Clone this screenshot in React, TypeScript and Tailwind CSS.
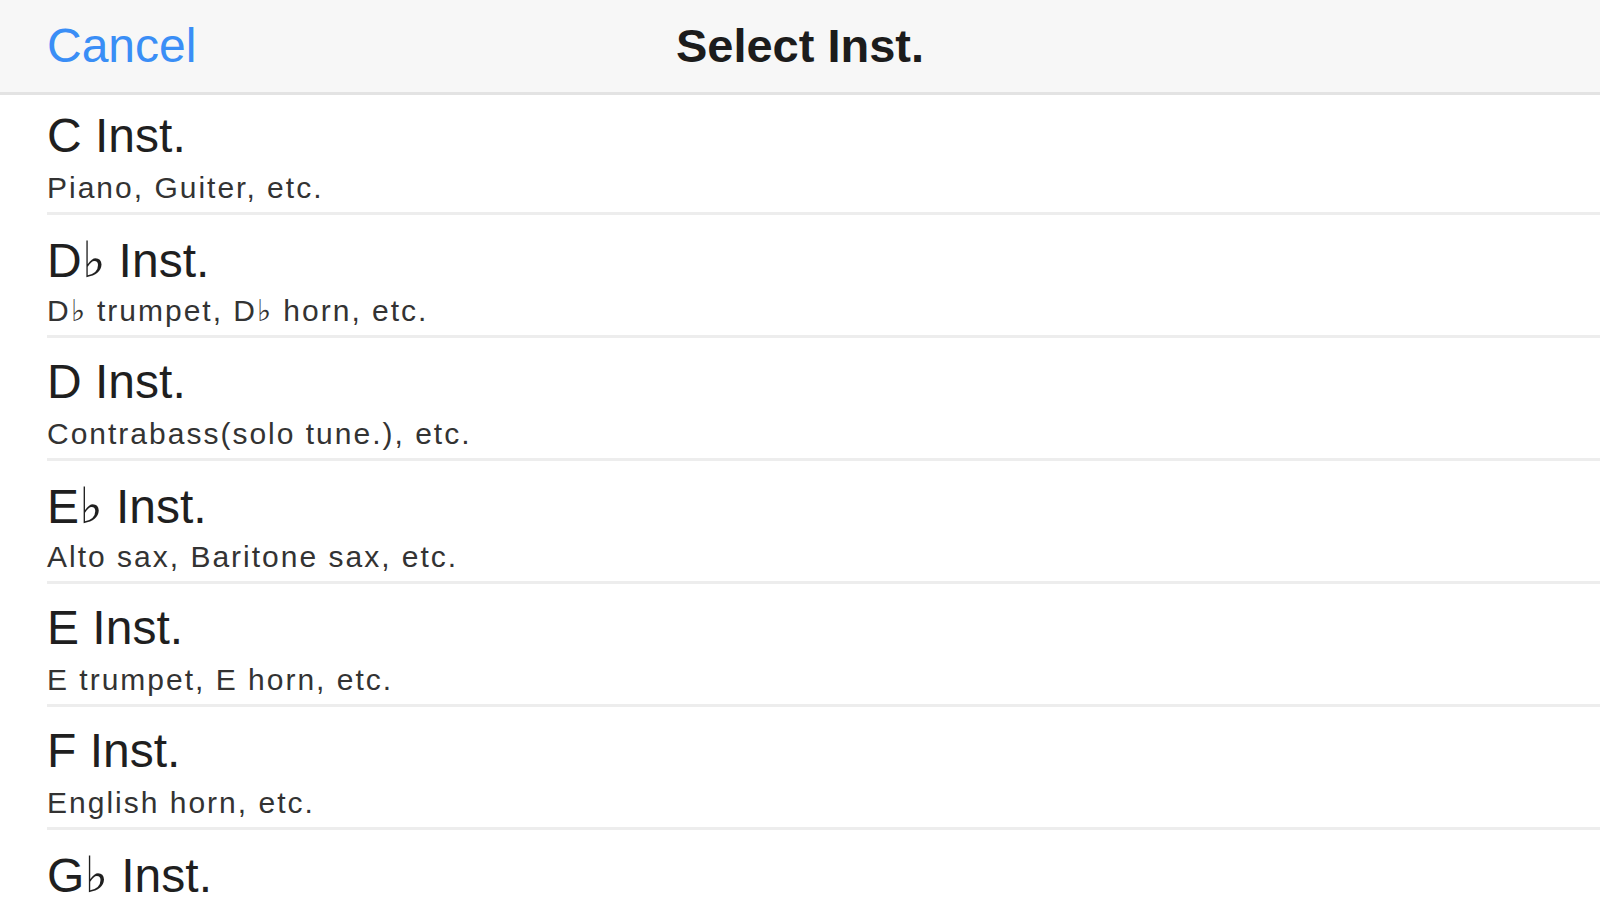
import React from 'react';

const items = [
  { key: 'C', flat: false, desc: 'Piano, Guiter, etc.' },
  { key: 'D', flat: true, desc: 'D♭ trumpet, D♭ horn, etc.' },
  { key: 'D', flat: false, desc: 'Contrabass(solo tune.), etc.' },
  { key: 'E', flat: true, desc: 'Alto sax, Baritone sax, etc.' },
  { key: 'E', flat: false, desc: 'E trumpet, E horn, etc.' },
  { key: 'F', flat: false, desc: 'English horn, etc.' },
  { key: 'G', flat: true, desc: 'Cellophone, etc.' },
];

export default function App() {
  return (
    <div className="h-[900px] w-[1600px] overflow-hidden bg-white font-['Liberation_Sans',Arial,sans-serif]">
      {/* Nav bar */}
      <div className="relative flex h-[95px] items-center border-b-[3px] border-[#e3e3e3] bg-[#f7f7f7] pl-[47px]">
        <span className="text-[48px] leading-[48px] text-[#3a8ef6]">Cancel</span>
        <span className="absolute left-1/2 -translate-x-1/2 text-[47px] font-bold leading-[48px] text-[#1c1c1c]">
          Select Inst.
        </span>
      </div>

      {/* Instrument list */}
      <div className="pl-[47px]">
        {items.map((item, idx) => (
          <div
            key={idx}
            className={`border-b-[3px] border-[#ededed] pb-[10px] ${idx === 0 ? 'pt-[17px]' : 'pt-[20px]'}`}
          >
            <div className="h-[48px] overflow-visible whitespace-nowrap text-[48px] leading-[48px] text-[#1f1f1f]">
              {item.key}
              {item.flat && (
                <span className="font-['DejaVu_Sans',sans-serif] text-[50px] leading-none">♭</span>
              )}{' '}
              Inst.
            </div>
            <div className="mt-[13px] h-[29px] whitespace-nowrap text-[30px] leading-[29px] tracking-[2px] text-[#333]">
              {item.desc}
            </div>
          </div>
        ))}
      </div>
    </div>
  );
}
